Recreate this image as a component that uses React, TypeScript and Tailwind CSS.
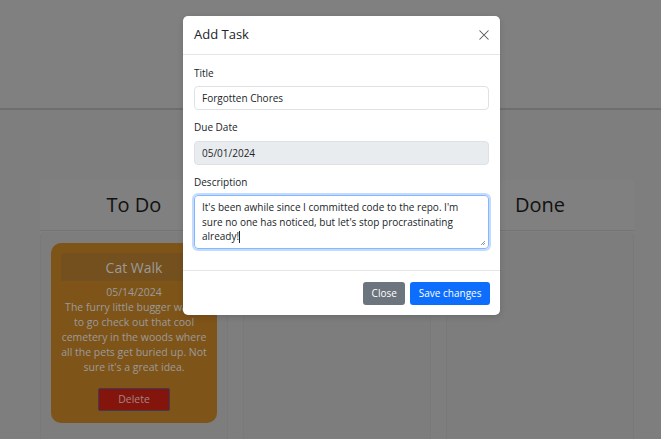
import React from "react";

function Column({ title, children }: { title?: string; children?: React.ReactNode }) {
  return (
    <div className="w-[188px] flex flex-col bg-[#808080]">
      <div className="h-[51px] flex items-center justify-center border-b border-[#747474] bg-[#808080]">
        {title ? <span className="text-[20px] text-[#111] leading-none">{title}</span> : null}
      </div>
      <div className="mt-px flex-1 rounded-t-[5px] bg-[#7d7d7d] border-l border-r border-[#797979] px-[10px] pt-[11px]">
        {children}
      </div>
    </div>
  );
}

export default function App() {
  return (
    <div
      className="relative w-[661px] h-[439px] overflow-hidden bg-[#7e7e7e]"
      style={{ fontFamily: '"Open Sans", "Noto Sans", sans-serif' }}
    >
      {/* page header band */}
      <div className="h-[110px] bg-[#808080] border-b-2 border-[#6e6e6e]" />

      {/* columns */}
      <div className="flex gap-[15px] pl-[40px] pt-[70px] h-[329px]">
        <Column title="To Do">
          <div className="rounded-[10px] bg-[#7f5419] px-[10px] pt-[10px] pb-[12px] flex flex-col items-center">
            <div className="w-full h-[28px] bg-[#74501e] rounded-[2px] flex items-center justify-center text-[14px] text-[#9a9a9a]">
              Cat Walk
            </div>
            <div className="mt-[4px] text-[10.5px] leading-[15px] text-[#9b9b9b] text-center">
              05/14/2024
              <br />
              The furry little bugger wants
              <br />
              to go check out that cool
              <br />
              cemetery in the woods where
              <br />
              all the pets get buried up. Not
              <br />
              sure it's a great idea.
            </div>
            <div className="mt-[13px] w-[72px] h-[23px] bg-[#84150d] border border-[#3f3a55] rounded-[2px] flex items-center justify-center text-[10.5px] text-[#a08585]">
              Delete
            </div>
          </div>
        </Column>
        <Column />
        <Column title="Done" />
      </div>

      {/* modal */}
      <div className="absolute left-[183px] top-[16px] w-[317px] h-[299px] bg-white rounded-[5px] shadow-[0_2px_6px_rgba(0,0,0,0.15)] flex flex-col text-[#212529]">
        <div className="h-[39px] flex items-center justify-between pl-[11px] pr-[10px] border-b border-[#e3e5e8]">
          <span className="text-[13px]">Add Task</span>
          <svg width="12" height="12" viewBox="0 0 16 16" className="text-[#555]">
            <path d="M2 2 L14 14 M14 2 L2 14" stroke="currentColor" strokeWidth="1.4" fill="none" />
          </svg>
        </div>
        <div className="flex-1 px-[11px] pt-[11px] text-[10px]">
          <div className="leading-[15px] mb-[5px]">Title</div>
          <div className="h-[24px] border border-[#dee2e6] rounded-[4px] flex items-center px-[7px] text-[10px]">
            Forgotten Chores
          </div>
          <div className="leading-[15px] mt-[10px] mb-[6px]">Due Date</div>
          <div className="h-[24px] border border-[#dee2e6] bg-[#e9ecef] rounded-[4px] flex items-center px-[7px] text-[10px]">
            05/01/2024
          </div>
          <div className="leading-[15px] mt-[10px] mb-[5px]">Description</div>
          <div className="relative h-[54px] border border-[#86b7fe] rounded-[4px] shadow-[0_0_0_2px_rgba(13,110,253,0.25)] px-[7px] pt-[4px] text-[10px] leading-[14.5px]">
            It's been awhile since I committed code to the repo. I'm
            <br />
            sure no one has noticed, but let's stop procrastinating
            <br />
            already!<span className="inline-block w-px h-[12px] bg-[#212529] align-middle" />
            <svg width="6" height="6" viewBox="0 0 6 6" className="absolute right-[2px] bottom-[2px]">
              <path d="M1 5 L5 1 M3 5 L5 3" stroke="#777" strokeWidth="0.8" />
            </svg>
          </div>
        </div>
        <div className="h-[45px] border-t border-[#e3e5e8] flex items-center justify-end gap-[5px] pr-[10px]">
          <div className="h-[23px] px-[8.5px] bg-[#6c757d] rounded-[3px] text-white text-[10px] flex items-center">
            Close
          </div>
          <div className="h-[23px] px-[8.5px] bg-[#0d6efd] rounded-[3px] text-white text-[10px] flex items-center">
            Save changes
          </div>
        </div>
      </div>
    </div>
  );
}
